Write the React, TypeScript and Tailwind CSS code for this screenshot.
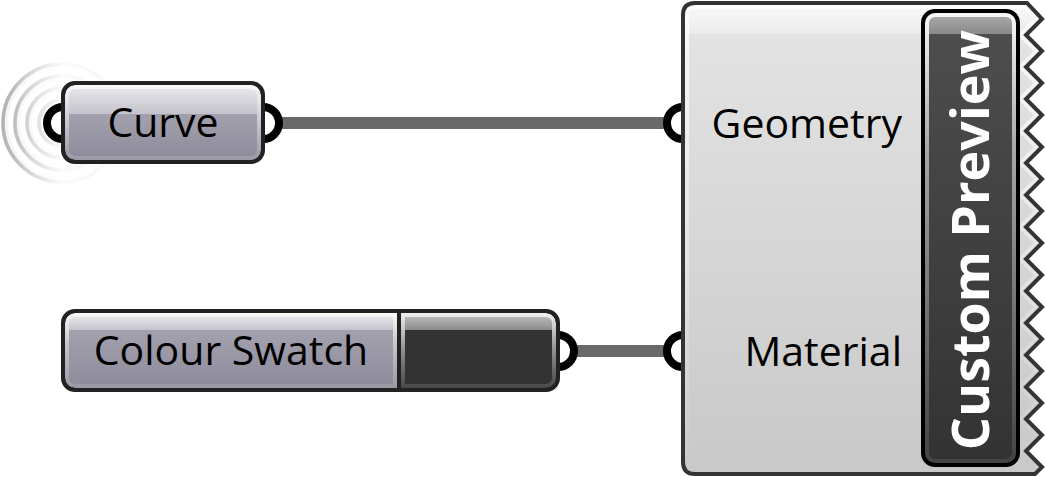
import type { ReactNode } from "react";

const TEETH = Array.from({ length: 14 }, (_, i) => `L361 ${19 + i * 32}L345 ${35 + i * 32}`).join("");
const OUTLINE = `M14 3H346${TEETH}L361 467L354 474H14Q2 474 2 462V15Q2 3 14 3Z`;

function Port({ className = "" }: { className?: string }) {
  return <span className={`relative size-10 shrink-0 rounded-full border-8 border-black bg-white ${className}`} />;
}

function Wire() {
  return <span className="-mx-1 h-3 flex-1 bg-[#696969]" />;
}

function Node({ children }: { children: ReactNode }) {
  return (
    <div className="relative z-10 flex shrink-0 overflow-hidden rounded-[14px] border-4 border-[#222222] bg-[#222222]">
      {children}
    </div>
  );
}

function Ripples() {
  return (
    <svg className="pointer-events-none absolute left-0 top-[61px] h-[124px] w-[124px]" viewBox="0 0 124 124" fill="none" aria-hidden="true">
      <defs>
        <linearGradient id="ripple" gradientUnits="userSpaceOnUse" x1="0" y1="0" x2="112" y2="0">
          <stop offset="0" stopColor="#b0b0b0" />
          <stop offset="0.12" stopColor="#bcbcbc" />
          <stop offset="0.32" stopColor="#dedede" />
          <stop offset="0.55" stopColor="#fafafa" />
          <stop offset="0.85" stopColor="#f7f7f7" />
          <stop offset="1" stopColor="#ffffff" />
        </linearGradient>
        <linearGradient id="haze" gradientUnits="userSpaceOnUse" x1="0" y1="0" x2="60" y2="0">
          <stop offset="0" stopColor="#f3f3f3" />
          <stop offset="1" stopColor="#ffffff" />
        </linearGradient>
      </defs>
      {[56, 44, 32, 22].map((r) => (
        <circle key={r} cx="62" cy="62" r={r} stroke="url(#haze)" strokeWidth="4" />
      ))}
      {[59, 47, 35, 23].map((r) => (
        <circle key={r} cx="62" cy="62" r={r} stroke="url(#ripple)" strokeWidth="3.6" />
      ))}
    </svg>
  );
}

function PanelShape() {
  return (
    <svg className="absolute inset-0 h-[477px] w-[364px]" viewBox="0 0 364 477" fill="none" aria-hidden="true">
      <defs>
        <linearGradient id="body" gradientUnits="userSpaceOnUse" x1="0" y1="0" x2="0" y2="477">
          <stop offset="0" stopColor="#fbfbfb" />
          <stop offset="0.071" stopColor="#ebebeb" />
          <stop offset="0.071" stopColor="#e3e3e3" />
          <stop offset="1" stopColor="#c8c8c8" />
        </linearGradient>
        <linearGradient id="rim" gradientUnits="userSpaceOnUse" x1="0" y1="0" x2="0" y2="477">
          <stop offset="0" stopColor="#ffffff" stopOpacity="0.75" />
          <stop offset="1" stopColor="#ffffff" stopOpacity="0" />
        </linearGradient>
        <clipPath id="edge">
          <path d={OUTLINE} />
        </clipPath>
      </defs>
      <path d={OUTLINE} fill="url(#body)" />
      <path d={OUTLINE} clipPath="url(#edge)" stroke="url(#rim)" strokeWidth="12" />
      <path d={OUTLINE} stroke="#333535" strokeWidth="4" />
    </svg>
  );
}

export default function App() {
  return (
    <main className="relative flex bg-white font-['Open_Sans','Noto_Sans',sans-serif] text-[41px] leading-[51px] text-black">
      <Ripples />
      <section className="flex flex-1 flex-col gap-[145px] pt-[81px]">
        <div className="flex items-center pl-[43px]">
          <Port className="-mr-[22px]" />
          <Node>
            <div className="rounded-[10px] bg-linear-to-b from-[#fafafa] from-0% via-[#d2d1d9] via-40% to-[#9a98a5] to-100% p-1">
              <div className="min-w-[188px] rounded-md bg-[linear-gradient(to_bottom,#e6e5ea_0%,#c3c2ca_38%,#a3a1ae_38%,#8f8d9b_100%)] pb-[9px] pt-[7px] text-center">
                Curve
              </div>
            </div>
          </Node>
          <Port className="-ml-[22px]" />
          <Wire />
          <Port className="-mr-[22px]" />
        </div>
        <div className="flex items-center pl-[61px]">
          <Node>
            <div className="rounded-l-[10px] bg-linear-to-b from-[#fafafa] from-0% via-[#c8c7d0] via-40% to-[#9a98a5] to-100% p-1">
              <div className="min-w-[324px] rounded-l-md bg-[linear-gradient(to_bottom,#e6e5ea_0%,#c3c2ca_20%,#a3a1ae_20%,#8f8d9b_100%)] pb-[9px] pt-[7px] text-center">
                Colour Swatch
              </div>
            </div>
            <div className="ml-1 flex w-[155px] rounded-r-[10px] bg-linear-to-b from-[#f2f2f2] from-0% via-[#8f8f8f] via-50% to-[#484848] to-100% p-1">
              <div className="flex-1 rounded-r-md bg-[linear-gradient(to_bottom,#b8b8b8_0%,#8a8a8a_20%,#333333_20%,#333333_100%)]" />
            </div>
          </Node>
          <Port className="-ml-[22px]" />
          <Wire />
          <Port className="-mr-[22px]" />
        </div>
      </section>
      <section className="relative z-10 flex min-h-[477px] w-[364px] shrink-0 pr-[25px]">
        <PanelShape />
        <div className="relative flex flex-1 flex-col gap-[145px] pr-[19px] pt-[81px] text-right">
          <div className="py-4">Geometry</div>
          <div className="py-4">Material</div>
        </div>
        <div className="relative mb-[10px] mt-[9px] flex w-[99px] rounded-[14px] border-4 border-black bg-black">
          <div className="flex flex-1 rounded-[10px] bg-linear-to-b from-[#f8f8f8] from-0% via-[#a8a8a8] via-30% to-[#444444] to-100% p-1">
            <div className="flex flex-1 items-center justify-center rounded-md bg-[linear-gradient(to_bottom,#a6a6a6_0px,#8a8a8a_17px,#4d4d4d_17px,#333333_100%)] pr-1 pt-1">
              <h1 className="rotate-180 whitespace-nowrap text-[52px] font-bold leading-[64px] text-white [writing-mode:vertical-rl]">
                Custom Preview
              </h1>
            </div>
          </div>
        </div>
      </section>
    </main>
  );
}
